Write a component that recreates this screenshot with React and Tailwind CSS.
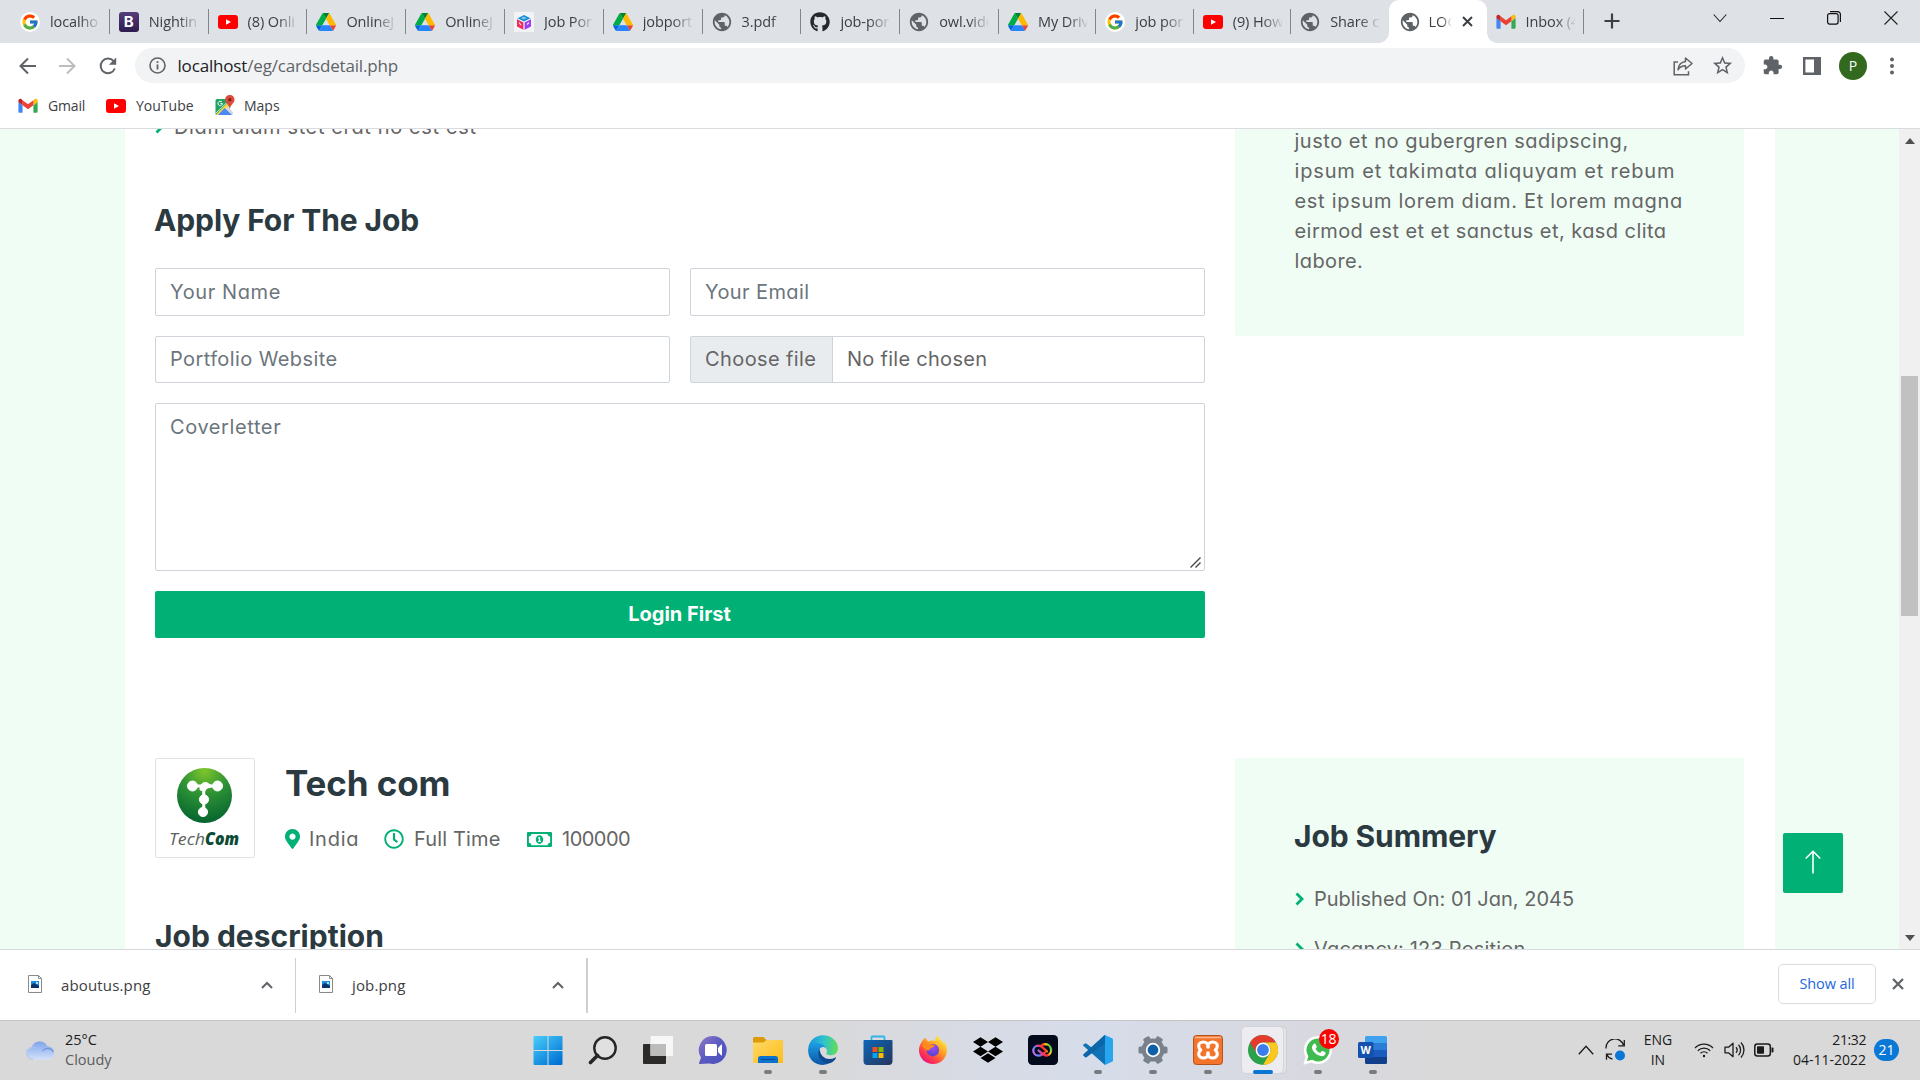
import React from "react";
import { FcGoogle } from "react-icons/fc";
import { FaGithub, FaMapMarkerAlt, FaRegClock, FaRegMoneyBillAlt } from "react-icons/fa";
import { MdExtension, MdPublic, MdStarBorder } from "react-icons/md";
import { SiDropbox } from "react-icons/si";

/* ---------- favicons ---------- */

const Google = () => (
  <div className="flex h-5 w-5 items-center justify-center rounded-full bg-white">
    <FcGoogle className="h-[18px] w-[18px]" />
  </div>
);

const Bootstrap = () => (
  <div className="flex h-5 w-5 items-center justify-center rounded-[3px] bg-gradient-to-b from-[#563d7c] to-[#2f1b50] font-['Inter',sans-serif] text-[15px] leading-none font-bold text-white">
    B
  </div>
);

const YouTube = () => (
  <svg className="h-5 w-5" viewBox="0 0 20 20">
    <rect x="0" y="3" width="20" height="14" rx="3" fill="#f00" />
    <path d="M8 7.200v5.600l5-2.800z" fill="#fff" />
  </svg>
);

const Drive = () => (
  <svg className="h-5 w-5" viewBox="0 0 87.3 78">
    <path d="m6.6 66.85 3.85 6.65c.8 1.4 1.95 2.5 3.3 3.3l13.75-23.8h-27.5c0 1.55.4 3.1 1.2 4.5z" fill="#0066da" />
    <path d="m43.65 25-13.75-23.8c-1.35.8-2.5 1.9-3.3 3.3l-25.4 44a9.06 9.06 0 0 0 -1.2 4.5h27.5z" fill="#00ac47" />
    <path d="m73.55 76.8c1.35-.8 2.5-1.9 3.3-3.3l1.6-2.75 7.65-13.25c.8-1.4 1.2-2.95 1.2-4.5h-27.502l5.852 11.5z" fill="#ea4335" />
    <path d="m43.65 25 13.75-23.8c-1.35-.8-2.9-1.2-4.5-1.2h-18.5c-1.6 0-3.15.45-4.5 1.2z" fill="#00832d" />
    <path d="m59.8 53h-32.3l-13.75 23.8c1.35.8 2.9 1.2 4.5 1.2h50.8c1.6 0 3.15-.45 4.5-1.2z" fill="#2684fc" />
    <path d="m73.4 26.5-12.7-22c-.8-1.4-1.95-2.5-3.3-3.3l-13.75 23.8 16.15 28h27.45c0-1.55-.4-3.1-1.2-4.5z" fill="#ffba00" />
  </svg>
);

const Cube = () => (
  <svg className="h-5 w-5" viewBox="0 0 20 20">
    <rect width="20" height="20" fill="#f3f3f5" />
    <path d="M10 3l6.5 3.2L10 9.5 3.5 6.2z" fill="#1c93d8" />
    <path d="M3 7.2l6.4 3.2v7.4L3 14.4z" fill="#ee2a5e" />
    <path d="M17 7.2l-6.4 3.2v7.4l6.4-3.4z" fill="#9b3df0" />
    <path d="M5 10.5l2 2.6M13 12.5l2-1.8M8 6h3.5" stroke="#f3f3f5" strokeWidth="1.1" />
  </svg>
);

const Globe = () => (
  <div className="flex h-5 w-5 items-center justify-center">
    <MdPublic className="h-[22px] w-[22px] shrink-0 text-[#5f6368]" />
  </div>
);

const Github = () => <FaGithub className="h-5 w-5 text-[#24292f]" />;

const Gmail = () => (
  <svg className="h-5 w-5" viewBox="0 0 24 24">
    <path d="M1.500 20h4V11L0.500 7v11.500c0 .8.400 1.500 1 1.500z" fill="#4285f4" />
    <path d="M18.500 20h3.500c.8 0 1.500-.7 1.500-1.500V7l-5 4z" fill="#34a853" />
    <path d="M18.500 5v6l5-3.800V5.800c0-2-2.200-3.100-3.700-1.900z" fill="#fbbc04" />
    <path d="M5.500 11V5L12 9.900 18.500 5v6L12 15.900z" fill="#ea4335" />
    <path d="M.5 5.800v1.400l5 3.800V5L4.200 3.900C2.700 2.700.5 3.800.5 5.800z" fill="#c5221f" />
  </svg>
);

const Maps = () => (
  <svg className="h-[22px] w-5" viewBox="0 0 20 22">
    <path d="M2 4h13v6L4 20H2a1.500 1.500 0 0 1-1.500-1.500v-13A1.500 1.500 0 0 1 2 4z" fill="#1ea362" />
    <path d="M9.500 13L17 20H3z" fill="#4a89f3" />
    <path d="M12 11l6 6v1.500a1.500 1.500 0 0 1-1.200 1.500L9.800 13.200z" fill="#d3d8de" />
    <path d="M1 19.500L14.500 6l2 2L4 20H2z" fill="#ffd73a" />
    <path d="M1 18L14 5.500" stroke="#fff" strokeWidth=".8" />
    <path d="M9.500 13L17 20H3z" fill="#4a89f3" />
    <path d="M14.800 0a4.600 4.600 0 0 1 4.700 4.700c0 3.300-3.900 4.500-4.700 9.500-.8-5-4.700-6.200-4.700-9.500A4.600 4.600 0 0 1 14.800 0z" fill="#dc4b3e" />
    <circle cx="14.800" cy="4.700" r="1.700" fill="#7a231b" />
    <path d="M6.800 6.900a2.200 2.200 0 1 0 .6 1.700H5.400" stroke="#fff" strokeWidth="1" fill="none" />
  </svg>
);

/* ---------- browser window ---------- */

const WIDE_TABS = [
  [Google, "localho"],
  [Bootstrap, "Nightin"],
  [YouTube, "(8) Onli"],
  [Drive, "OnlineJ"],
  [Drive, "OnlineJ"],
  [Cube, "Job Por"],
  [Drive, "jobport"],
  [Globe, "3.pdf"],
  [Github, "job-por"],
  [Globe, "owl.vide"],
];

const NARROW_TABS = [
  [Drive, "My Driv"],
  [Google, "job por"],
  [YouTube, "(9) How"],
];

function Tab({ Icon, title, width, noLine }) {
  return (
    <div className={"flex h-full shrink-0 items-center pl-[9px] " + width}>
      <Icon />
      <div className="ml-[10px] w-[49px] overflow-hidden text-[14.500px] tracking-[-0.1px] whitespace-nowrap text-[#3c4043] [mask-image:linear-gradient(to_right,black_60%,transparent_104%)]">
        {title}
      </div>
      {!noLine && <div className="ml-auto h-[25px] w-px bg-[#80868b]" />}
    </div>
  );
}

function TabStrip() {
  return (
    <div className="flex h-[43px] bg-[#dee1e6] pl-[11px]">
      {WIDE_TABS.map(([Icon, title], i) => (
        <Tab key={i} Icon={Icon} title={title} width="w-[98.8px]" />
      ))}
      {NARROW_TABS.map(([Icon, title], i) => (
        <Tab key={i} Icon={Icon} title={title} width="w-[97.4px]" />
      ))}
      <Tab Icon={Globe} title="Share c" width="w-[97.4px]" noLine />
      <div className="relative flex h-full w-[98px] shrink-0 items-center rounded-t-[10px] bg-white pl-[11px]">
        <div className="absolute bottom-0 -left-[10px] h-[10px] w-[10px] bg-[radial-gradient(circle_at_0_0,#dee1e6_9.500px,white_10px)]" />
        <div className="absolute -right-[10px] bottom-0 h-[10px] w-[10px] bg-[radial-gradient(circle_at_100%_0,#dee1e6_9.500px,white_10px)]" />
        <Globe />
        <div className="ml-[9px] w-[23px] overflow-hidden text-[14.500px] whitespace-nowrap text-[#3c4043] [mask-image:linear-gradient(to_right,black_55%,transparent)]">
          LOG
        </div>
        <svg className="ml-[10px] h-[11px] w-[11px]" viewBox="0 0 11 11">
          <path d="M1 1l9 9M10 1l-9 9" stroke="#3c4043" strokeWidth="2" />
        </svg>
      </div>
      <Tab Icon={Gmail} title="Inbox (4" width="w-[97.4px]" />
      <svg className="mt-[13px] ml-5 h-4 w-4" viewBox="0 0 16 16">
        <path d="M8 .5v15M.5 8h15" stroke="#3c4043" strokeWidth="2.200" />
      </svg>
      <div className="ml-auto flex items-center gap-[43px] pr-[22px] pb-[7px]">
        <svg className="h-[14px] w-[14px]" viewBox="0 0 14 14">
          <path d="M.7 3.500L7 10.500l6.300-7" fill="none" stroke="#222" strokeWidth="1.100" />
        </svg>
        <svg className="h-[14px] w-[14px]" viewBox="0 0 14 14">
          <path d="M0 7.500h14" stroke="#111" />
        </svg>
        <svg className="h-[14px] w-[14px]" viewBox="0 0 14 14">
          <rect x=".6" y="2.600" width="10.500" height="10.500" rx="2" fill="none" stroke="#111" strokeWidth="1.200" />
          <path d="M3 .6h7.500a2.800 2.800 0 0 1 2.900 2.900V11" fill="none" stroke="#111" strokeWidth="1.200" />
        </svg>
        <svg className="h-[14px] w-[14px]" viewBox="0 0 14 14">
          <path d="M.5.5l13 13M13.500.5l-13 13" stroke="#222" strokeWidth="1.100" />
        </svg>
      </div>
    </div>
  );
}

function Toolbar() {
  return (
    <div className="flex h-[45px] items-center bg-white pl-[18px]">
      <svg className="h-5 w-5" viewBox="0 0 20 20" fill="none" stroke="#5f6368" strokeWidth="2">
        <path d="M18 10H2.500M10 2.500L2.500 10l7.500 7.500" />
      </svg>
      <svg className="ml-[19px] h-5 w-5" viewBox="0 0 20 20" fill="none" stroke="#bbbdbf" strokeWidth="2">
        <path d="M2 10h15.500M10 2.500l7.500 7.500-7.500 7.500" />
      </svg>
      <svg className="ml-[21px] h-5 w-5" viewBox="0 0 20 20">
        <path d="M16.800 12.500A7.300 7.300 0 1 1 15.600 5.200" fill="none" stroke="#5f6368" strokeWidth="2" />
        <path d="M18.200 1.500v7.300h-7.300z" fill="#5f6368" />
      </svg>
      <div className="ml-[17px] flex h-[35px] w-[1610px] items-center rounded-full bg-[#f1f3f4] pr-[11px] pl-[14px]">
        <svg className="h-[17px] w-[17px]" viewBox="0 0 17 17">
          <circle cx="8.500" cy="8.500" r="7.500" fill="none" stroke="#5f6368" strokeWidth="1.600" />
          <path d="M8.500 7.500v5M8.500 4.300v1.800" stroke="#5f6368" strokeWidth="1.800" />
        </svg>
        <div className="ml-[11.500px] text-[17px] tracking-[-0.17px] text-[#5f6368]">
          <span className="text-[#202124]">localhost</span>/eg/cardsdetail.php
        </div>
        <svg className="ml-auto h-5 w-5" viewBox="0 0 20 20" fill="none" stroke="#5f6368" strokeWidth="1.500">
          <path d="M5 6H1.200v12.800h14.300v-3.500" />
          <path d="M12.500 2l6.500 5.500-6.500 5.500v-3.200c-3.500 0-5.700 1.200-7.500 4 .4-4.500 2.800-7.800 7.500-8.400z" strokeLinejoin="round" />
        </svg>
        <MdStarBorder className="ml-[18px] h-[23px] w-[23px] text-[#5f6368]" />
      </div>
      <MdExtension className="ml-[17px] h-[21px] w-[21px] text-[#5f6368]" />
      <svg className="ml-5 h-[18px] w-[18px]" viewBox="0 0 18 18">
        <path d="M1.200 1.200h15.600v15.600H1.200z" fill="none" stroke="#5f6368" strokeWidth="2.400" />
        <path d="M11 1h6v16h-6z" fill="#5f6368" />
      </svg>
      <div className="ml-[18px] flex h-7 w-7 items-center justify-center rounded-full bg-[#33691e] text-sm text-white">P</div>
      <svg className="ml-[23px] h-5 w-1" viewBox="0 0 4 20" fill="#5f6368">
        <circle cx="2" cy="3.500" r="2" />
        <circle cx="2" cy="10" r="2" />
        <circle cx="2" cy="16.500" r="2" />
      </svg>
    </div>
  );
}

function Bookmarks() {
  return (
    <div className="flex h-[41px] items-center border-b border-[#d9dbde] bg-white pb-[5px] pl-[18px] text-sm text-[#3c4043]">
      <Gmail />
      <div className="ml-[10px] w-[38px] tracking-[-0.15px]">Gmail</div>
      <div className="ml-5">
        <YouTube />
      </div>
      <div className="ml-[10px] w-[58px]">YouTube</div>
      <div className="ml-[21px]">
        <Maps />
      </div>
      <div className="ml-[9px]">Maps</div>
    </div>
  );
}

/* ---------- web page ---------- */

const Chevron = () => (
  <svg className="h-[14px] w-[9px] shrink-0" viewBox="0 0 9 14">
    <path d="M1.500 1.500L7 7l-5.500 5.500" fill="none" stroke="#00b074" strokeWidth="2.800" />
  </svg>
);

const FIELD = "flex h-full items-center rounded-[2px] border border-[#ced4da] bg-white px-[14px] text-[#6c757d]";
const HEAD = "font-['Inter',sans-serif] text-[30px] leading-9 font-bold text-[#2b3940]";

function ApplyForm() {
  return (
    <div>
      <div className="-mt-[17px] flex items-center">
        <Chevron />
        <span className="ml-[10px] tracking-[0.63px]">Diam diam stet erat no est est</span>
      </div>
      <h4 className={HEAD + " mt-[60px] mb-[30px] -ml-px tracking-[-0.1px]"}>Apply For The Job</h4>
      <div className="grid grid-cols-2 grid-rows-[48px_47px_168px_47px] gap-5">
        <div className={FIELD + " tracking-[0.6px]"}>Your Name</div>
        <div className={FIELD + " tracking-[0.4px]"}>Your Email</div>
        <div className={FIELD + " pb-px tracking-[0.4px]"}>Portfolio Website</div>
        <div className="flex h-full overflow-hidden rounded-[2px] border border-[#ced4da] bg-white">
          <div className="flex w-[142px] items-center border-r border-[#ced4da] bg-[#e9ecef] pb-px pl-[14px] tracking-[0.4px]">Choose file</div>
          <div className="flex items-center pb-px pl-[14px] tracking-[0.28px]">No file chosen</div>
        </div>
        <div className="relative col-span-2 rounded-[2px] border border-[#ced4da] bg-white px-[14px] py-2 tracking-[0.6px] text-[#6c757d]">
          Coverletter
          <svg className="absolute right-[3px] bottom-[2px] h-[11px] w-[11px]" viewBox="0 0 11 11">
            <path d="M.5 10.500l10-10M5.500 10.500l5-5" stroke="#444" strokeWidth="1.400" />
          </svg>
        </div>
        <div className="col-span-2 flex items-center justify-center rounded-[2px] bg-[#00b074] pr-px pb-px font-['Inter',sans-serif] font-bold text-white">
          Login First
        </div>
      </div>
    </div>
  );
}

function CompanyLogo() {
  return (
    <div className="h-[100px] w-[100px] rounded-[2px] border border-[#dee2e6] bg-white">
      <svg viewBox="0 0 98 98" className="h-full w-full">
        <defs>
          <radialGradient id="orb" cx=".5" cy=".05" r=".95">
            <stop offset="0" stopColor="#7fc62a" />
            <stop offset=".45" stopColor="#2f9335" />
            <stop offset="1" stopColor="#04642f" />
          </radialGradient>
        </defs>
        <circle cx="48.500" cy="36.500" r="27.500" fill="url(#orb)" />
        <g fill="#fff" stroke="#fff">
          <path d="M36 27h10M49 27h13M47.700 27v26" strokeWidth="3" />
          <circle cx="36.500" cy="27" r="5" />
          <path d="M44 31c0-5 2-7.500 5.500-7.500 2.500 0 3 2 5 2v3c-3 0-4.500 1-5.500 3.500z" />
          <circle cx="61.500" cy="27" r="5" />
          <circle cx="48" cy="40.500" r="4.600" />
          <circle cx="47" cy="53" r="4.600" />
        </g>
        <text x="13" y="86" fontFamily="Open Sans" fontSize="17" fontStyle="italic" fill="#5a625e" textLength="36" lengthAdjust="spacingAndGlyphs">
          Tech
        </text>
        <text x="49" y="86" fontFamily="Open Sans" fontSize="17" fontStyle="italic" fontWeight="800" fill="#0c4a33" textLength="34" lengthAdjust="spacingAndGlyphs">
          Com
        </text>
      </svg>
    </div>
  );
}

function JobHeader() {
  return (
    <div>
      <div className="flex items-center">
        <CompanyLogo />
        <div className="ml-[30px]">
          <h3 className="font-['Inter',sans-serif] text-[35px] leading-[42px] font-bold tracking-[-0.1px] text-[#2b3940]">Tech com</h3>
          <div className="mt-5 flex items-center">
            <FaMapMarkerAlt className="h-5 w-[15px] text-[#00b074]" />
            <span className="ml-[9px] w-[49px] tracking-[0.75px]">India</span>
            <FaRegClock className="ml-[26px] h-5 w-5 text-[#00b074]" />
            <span className="ml-[10px] w-[88px] tracking-[0.15px]">Full Time</span>
            <FaRegMoneyBillAlt className="ml-[25px] h-[25px] w-[25px] text-[#00b074]" />
            <span className="ml-[10px] tracking-[-0.5px]">100000</span>
          </div>
        </div>
      </div>
      <h4 className={HEAD + " mt-[60px] whitespace-nowrap"}>Job description</h4>
    </div>
  );
}

function Page() {
  return (
    <div className="relative flex h-[820px] overflow-hidden bg-[#effdf5] font-['Inter',sans-serif] text-xl leading-[30px] text-[#666565] [font-feature-settings:'cv11','calt'_0]">
      <div className="ml-[125px] grid h-full w-[1650px] grid-cols-[1050px_509px] grid-rows-[629px_300px] gap-x-[30px] bg-white pl-[30px]">
        <ApplyForm />
        <div className="h-[207px] rounded-b-[2px] bg-[#effdf5] pl-[59.500px] whitespace-nowrap">
          <div className="-mt-[3px]">
            <div className="tracking-[0.52px]">justo et no gubergren sadipscing,</div>
            <div className="tracking-[0.84px]">ipsum et takimata aliquyam et rebum</div>
            <div className="tracking-[0.7px]">est ipsum lorem diam. Et lorem magna</div>
            <div className="tracking-[0.44px]">eirmod est et et sanctus et, kasd clita</div>
            <div className="tracking-[0.4px]">labore.</div>
          </div>
        </div>
        <JobHeader />
        <div className="bg-[#effdf5] px-[60px] pt-[60px]">
          <h4 className={HEAD + " -ml-px tracking-[-0.1px]"}>Job Summery</h4>
          <div className="mt-[30px] flex items-center">
            <Chevron />
            <span className="ml-[10px]">Published On: 01 Jan, 2045</span>
          </div>
          <div className="mt-5 flex items-center">
            <Chevron />
            <span className="ml-[10px] tracking-[0.18px]">Vacancy: 123 Position</span>
          </div>
        </div>
      </div>
      <div className="ml-auto flex h-full w-[21px] flex-col items-center bg-[#f0f0f0]">
        <svg className="mt-[9px] h-[6px] w-[10px]" viewBox="0 0 10 6">
          <path d="M0 6l5-6 5 6z" fill="#505050" />
        </svg>
        <div className="mt-[232px] h-[240px] w-[17px] bg-[#c1c1c1]" />
        <svg className="mt-auto mb-[8px] h-[6px] w-[10px]" viewBox="0 0 10 6">
          <path d="M0 0l5 6 5-6z" fill="#505050" />
        </svg>
      </div>
      <div className="absolute right-[77px] bottom-[56px] flex h-[60px] w-[60px] items-center justify-center rounded-[2px] bg-[#00b074] pb-[2px]">
        <svg className="h-6 w-4" viewBox="0 0 16 24">
          <path d="M8 23V1.500M1.200 8L8 1.300 14.800 8" fill="none" stroke="#fff" strokeWidth="1.600" strokeLinecap="round" />
        </svg>
      </div>
    </div>
  );
}

/* ---------- downloads bar ---------- */

function Download({ name }) {
  return (
    <div className="flex h-[55px] items-center">
      <svg className="-mt-[3px] ml-7 h-[18px] w-[14px]" viewBox="0 0 14 18">
        <path d="M.5.5h10l3 3v14H.5z" fill="#fff" stroke="#8a8a8a" />
        <path d="M10.500.5v3h3" fill="none" stroke="#8a8a8a" />
        <path d="M3 6h8v7H3z" fill="#1c8be0" />
        <path d="M3 10l3-2 5 3v2H3z" fill="#0b3566" />
        <circle cx="9" cy="8" r="1" fill="#dff" />
      </svg>
      <div className="ml-[19px] w-[200px] text-[15px] tracking-[0.15px] text-[#3c4043]">{name}</div>
      <svg className="h-2 w-3" viewBox="0 0 12 8">
        <path d="M1 7l5-5 5 5" fill="none" stroke="#5f6368" strokeWidth="2" />
      </svg>
    </div>
  );
}

function DownloadBar() {
  return (
    <div className="flex h-[71px] items-center border-t border-[#d6d8db] bg-white">
      <div className="flex w-[296px] border-r border-[#cfcfcf]">
        <Download name="aboutus.png" />
      </div>
      <div className="flex w-[292px] border-r-2 border-[#cfcfcf]">
        <div className="-ml-[5px]">
          <Download name="job.png" />
        </div>
      </div>
      <div className="mb-[3px] ml-auto flex h-10 w-[98px] items-center justify-center rounded-[5px] border border-[#dadce0] text-[14.500px] tracking-[-0.1px] text-[#1a66e0]">
        Show all
      </div>
      <svg className="mr-4 mb-[2px] ml-4 h-3 w-3" viewBox="0 0 12 12">
        <path d="M1 1l10 10M11 1L1 11" stroke="#5f6368" strokeWidth="2.200" />
      </svg>
    </div>
  );
}

/* ---------- taskbar ---------- */

const Start = () => (
  <svg className="h-[30px] w-[30px]" viewBox="0 0 30 30">
    <defs>
      <linearGradient id="win" gradientUnits="userSpaceOnUse" x1="0" y1="0" x2="24" y2="30">
        <stop offset="0" stopColor="#4cd0fd" />
        <stop offset="1" stopColor="#0072d3" />
      </linearGradient>
    </defs>
    <path d="M.5 2a1 1 0 0 1 1-1H14.500v14H.5zM15.500 1H28.500a1 1 0 0 1 1 1v13h-14zM.5 16h14v14h-13a1 1 0 0 1-1-1zM15.500 16h14v13a1 1 0 0 1-1 1h-13z" fill="url(#win)" />
  </svg>
);

const Search = () => (
  <svg className="h-[30px] w-[30px]" viewBox="0 0 30 30" fill="none" stroke="#262626">
    <circle cx="17" cy="13" r="10.700" strokeWidth="2.400" fill="#ffffff30" />
    <path d="M9.500 20.500L2.500 27.500" strokeWidth="3.600" strokeLinecap="round" />
  </svg>
);

const TaskView = () => (
  <svg className="h-[30px] w-[30px]" viewBox="0 0 30 30">
    <rect x="0" y="9" width="23" height="20" rx="1" fill="#2c2b29" />
    <rect x="7.500" y="1" width="22.500" height="20" rx="1" fill="#f7f7f7" />
    <rect x="7.500" y="9" width="15.500" height="12" fill="#bcbcba" />
  </svg>
);

const Teams = () => (
  <svg className="h-[30px] w-[30px]" viewBox="0 0 30 30">
    <defs>
      <linearGradient id="chat" x1="0" y1="0" x2="1" y2="1">
        <stop offset="0" stopColor="#8d78c8" />
        <stop offset=".5" stopColor="#5a5ac0" />
        <stop offset="1" stopColor="#4b50bd" />
      </linearGradient>
    </defs>
    <path d="M15 1a14 14 0 1 1-4 27.500L1.800 29c-.8 0-1-.6-.7-1.200L3 22.500A14 14 0 0 1 15 1z" fill="url(#chat)" />
    <rect x="7" y="9" width="12" height="12" rx="1.500" fill="#fff" />
    <path d="M20 13l3-3.200c.5-.5 1 0 1 .5v9.400c0 .5-.5 1-1 .5L20 17z" fill="#fff" />
  </svg>
);

const Folder = () => (
  <svg className="h-[30px] w-[30px]" viewBox="0 0 30 30">
    <defs>
      <linearGradient id="fold" x1="0" y1="0" x2="1" y2="1">
        <stop offset="0" stopColor="#ffd869" />
        <stop offset="1" stopColor="#fdbd17" />
      </linearGradient>
    </defs>
    <path d="M0 3.500A1.500 1.500 0 0 1 1.500 2h9l3 3H28a2 2 0 0 1 2 2v5H0z" fill="#dd9b0b" />
    <path d="M0 7.500h10.500L13.500 5H28.500A1.500 1.500 0 0 1 30 6.500V28H0z" fill="url(#fold)" />
    <path d="M5 28v-4.500A2.500 2.500 0 0 1 7.500 21h15a2.500 2.500 0 0 1 2.500 2.500V28z" fill="#0c72cb" />
    <path d="M8.500 24.500h13" stroke="#064b8f" strokeWidth="1.200" strokeLinecap="round" />
  </svg>
);

const Edge = () => (
  <svg className="h-[30px] w-[30px]" viewBox="0 0 30 30">
    <defs>
      <linearGradient id="edgeA" x1="0" y1=".4" x2="1" y2=".5">
        <stop offset="0" stopColor="#1a92de" />
        <stop offset=".5" stopColor="#2fc3cf" />
        <stop offset="1" stopColor="#62dc57" />
      </linearGradient>
      <linearGradient id="edgeB" x1="0" y1="0" x2="0" y2="1">
        <stop offset="0" stopColor="#1b9ee2" />
        <stop offset="1" stopColor="#0c56a6" />
      </linearGradient>
    </defs>
    <path d="M.3 12.500C1.500 5.500 7.500.2 15 .2c8.500 0 15 6 15 13 0 4.200-3 7-7.200 7-3.300 0-5-1.200-4.300-2.300.9-1.500.6-3.200-.8-5-2.500-3.200-10.500-4.700-17.400-.4z" fill="url(#edgeA)" />
    <path d="M.2 14C.6 9.500 5 7.700 9 7.900c5 .2 8 2.600 8.800 5.300-1.800-2-5-1.700-6.100.7-2.400 6 2.300 15 11 13.600a15 15 0 0 1-8.400 2.400C5 29.600-.6 22.500.2 14z" fill="url(#edgeB)" />
    <path d="M11.600 14c-3.500 5.500.5 14.500 9.500 14.300 3-.1 5.500-2.600 6.800-5 .4-.9-.3-1-1-.6-6.500 3.200-14.500.5-15.300-8.700z" fill="#11498f" />
  </svg>
);

const Store = () => (
  <svg className="h-[30px] w-[30px]" viewBox="0 0 30 30">
    <defs>
      <linearGradient id="store" x1="0" y1="0" x2="1" y2="1">
        <stop offset="0" stopColor="#0e66b8" />
        <stop offset="1" stopColor="#26355c" />
      </linearGradient>
    </defs>
    <path d="M8.500 6V2.500A1 1 0 0 1 9.500 1.500h11a1 1 0 0 1 1 1V6" fill="none" stroke="#2fb4ec" strokeWidth="1.800" />
    <path d="M.5 6a1 1 0 0 1 1-1h27a1 1 0 0 1 1 1v20a4 4 0 0 1-4 4h-21a4 4 0 0 1-4-4z" fill="url(#store)" />
    <path d="M9.500 12h5v5h-5z" fill="#f25022" />
    <path d="M15.500 12h5v5h-5z" fill="#7fba00" />
    <path d="M9.500 18h5v5h-5z" fill="#00a4ef" />
    <path d="M15.500 18h5v5h-5z" fill="#ffb900" />
  </svg>
);

const Firefox = () => (
  <svg className="h-[30px] w-[30px]" viewBox="0 0 30 30">
    <defs>
      <linearGradient id="fox" x1=".85" y1=".1" x2=".2" y2=".95">
        <stop offset="0" stopColor="#fff04a" />
        <stop offset=".4" stopColor="#ff9a1f" />
        <stop offset=".75" stopColor="#ff3a4d" />
        <stop offset="1" stopColor="#e8127e" />
      </linearGradient>
      <radialGradient id="foxCore" cx=".5" cy=".3" r=".7">
        <stop offset="0" stopColor="#a04bf0" />
        <stop offset="1" stopColor="#5544cf" />
      </radialGradient>
    </defs>
    <path d="M19.500.3c-2 2-2.200 4-2.100 5.500-2.500-.6-5-.4-7 .7L8.700 5 7.500 2.800C5.500 4.200 4 6 3.600 7.300 1.300 10.300.7 13.500 1.100 17 2 24 7.800 29 15 29c8 0 14-6.200 14-14 0-4.500-1.800-7.200-3.300-8.700l.2 2.600C24.500 5 20.500 4 19.500.3z" fill="url(#fox)" />
    <circle cx="14.800" cy="15.200" r="6.200" fill="url(#foxCore)" />
    <path d="M4 9.500c2-1.800 5-1.500 6.700.5 1.500-.7 4.500-.8 6 1-1 1.400-2.700 1.500-4 2.200-1 .7-.5 1.800-2.400 2.300C8.200 15.500 5 13 4 9.500z" fill="#ff8a1c" />
  </svg>
);

const Dropbox = () => <SiDropbox className="h-[30px] w-[30px] text-black" />;

const CreativeCloud = () => (
  <svg className="h-[30px] w-[30px]" viewBox="0 0 30 30">
    <defs>
      <linearGradient id="cc" x1="0" y1=".7" x2="1" y2=".4">
        <stop offset="0" stopColor="#c56bf5" />
        <stop offset=".2" stopColor="#4a8cff" />
        <stop offset=".4" stopColor="#f0388a" />
        <stop offset=".65" stopColor="#ff3a1d" />
        <stop offset=".85" stopColor="#ffd21d" />
        <stop offset="1" stopColor="#4ed24a" />
      </linearGradient>
    </defs>
    <rect width="30" height="30" rx="4.500" fill="#020a1c" />
    <path
      d="M17 17.500l-2.800 2c-1 .7-2.200 1.100-3.700 1.100a5 5 0 0 1-.3-10c1.600 0 2.700.5 4 1.600l4.800 4.300M12.500 11.200c1.300-1.300 3-2 5-2a5.800 5.800 0 0 1 1.300 11.400c-2 0-3-.7-4.200-1.700L10.500 15.500"
      fill="none"
      stroke="url(#cc)"
      strokeWidth="2.300"
      strokeLinecap="round"
    />
  </svg>
);

const VSCode = () => (
  <svg className="h-[30px] w-[30px]" viewBox="0 0 30 30">
    <path d="M22 0L8.800 12.700 3 8.200.6 9.300a1 1 0 0 0 0 1.600L22 30V21z" fill="#0f73b5" />
    <path d="M22 0v8.500L3.500 22.300c-.5.300-.9.300-1.300 0L.5 20.700a1 1 0 0 1 0-1.500L21 .6z" fill="#0a66a8" />
    <path d="M22 0l7 3.200c.6.300 1 .8 1 1.500v20.600c0 .7-.4 1.200-1 1.500L22 30z" fill="#27a5ee" />
  </svg>
);

const Settings = () => (
  <svg className="h-[30px] w-[30px]" viewBox="0 0 30 30">
    <g fill="#79818a">
      <circle cx="15" cy="15" r="11.500" />
      <rect x="11.500" y="0.500" width="7" height="29" rx="1.500" transform="rotate(30 15 15)" />
      <rect x="11.500" y="0.500" width="7" height="29" rx="1.500" transform="rotate(90 15 15)" />
      <rect x="11.500" y="0.500" width="7" height="29" rx="1.500" transform="rotate(150 15 15)" />
    </g>
    <circle cx="15" cy="15" r="6.300" fill="#0f5fa8" stroke="#fff" strokeWidth="1.800" />
  </svg>
);

const Xampp = () => (
  <svg className="h-[30px] w-[30px]" viewBox="0 0 30 30">
    <rect x=".5" y=".5" width="29" height="29" rx="3" fill="#f3742a" stroke="#b4531b" />
    <path d="M2 2.500h26" stroke="#f9b78f" strokeWidth="1.500" />
    <path
      d="M15 11.200c0-2.500-1.800-4.200-4.600-4.200S5.700 8.800 5.700 11c0 1.700.8 3 2 4-1.200 1-2 2.300-2 4 0 2.200 1.900 4 4.700 4s4.600-1.700 4.600-4.200c0 2.500 1.800 4.200 4.600 4.200s4.700-1.800 4.700-4c0-1.700-.8-3-2-4 1.200-1 2-2.300 2-4 0-2.200-1.900-4-4.700-4S15 8.700 15 11.200z"
      fill="none"
      stroke="#fff"
      strokeWidth="3.200"
      strokeLinejoin="round"
    />
    <path d="M13.400 10.500h3.200v3h-3.200zM13.400 16.500h3.200v3h-3.200z" fill="#fff" />
  </svg>
);

const Chrome = () => (
  <svg className="h-[30px] w-[30px]" viewBox="0 0 30 30">
    <circle cx="15" cy="15" r="15" fill="#2ba14b" />
    <path d="M15 0a15 15 0 0 1 13 7.500H15A7.500 7.500 0 0 0 8.500 18.700L2 7.500A15 15 0 0 1 15 0z" fill="#e33b2e" />
    <path d="M28 7.500A15 15 0 0 1 15 30l6.500-11.300A7.500 7.500 0 0 0 21.500 11.300 7.500 7.500 0 0 0 15 7.500z" fill="#fcc71f" />
    <circle cx="15" cy="15" r="7.400" fill="#fff" />
    <circle cx="15" cy="15" r="5.900" fill="#3b7ded" />
  </svg>
);

const WhatsApp = () => (
  <div className="relative h-[30px] w-[30px]">
    <svg className="h-[30px] w-[30px]" viewBox="0 0 30 30">
      <path d="M15 1A14 14 0 0 1 15 29a14 14 0 0 1-6.700-1.600L.3 29.700l2.300-7.900A14 14 0 0 1 15 1z" fill="#fff" />
      <path d="M15 3.500A11.500 11.500 0 1 1 9 24.800l-5 1.300 1.400-4.800A11.500 11.500 0 0 1 15 3.500z" fill="#3fbb50" />
      <path d="M10.800 9c.6-.6 1.500-.6 1.800.1l1.100 2.500c.2.600-.1 1-1.200 2.200 1.200 2.200 2.600 3.400 4.700 4.200l1.400-1.700c.3-.4.7-.4 1.100-.2l2.500 1.200c.6.300.4 1.500 0 2.200-1 1.600-3.200 2-5.200 1.300-4.200-1.400-6.500-3.800-7.800-6.900-.7-2 .2-3.700 1.600-4.900z" fill="#fff" />
    </svg>
    <div className="absolute -top-[6px] left-4 flex h-5 w-5 items-center justify-center rounded-full bg-[#f90400] text-sm leading-none tracking-[-0.3px] text-white">
      18
    </div>
  </div>
);

const Word = () => (
  <svg className="h-[30px] w-[30px]" viewBox="0 0 30 30">
    <path d="M7 2.500A1.500 1.500 0 0 1 8.500 1h19A1.500 1.500 0 0 1 29 2.500V8H7z" fill="#3fa2ee" />
    <path d="M7 8h22v7H7z" fill="#2a7cd6" />
    <path d="M7 15h22v7H7z" fill="#1a5dbe" />
    <path d="M7 22h22v5.500a1.500 1.500 0 0 1-1.500 1.500h-19A1.500 1.500 0 0 1 7 27.500z" fill="#113f8c" />
    <rect x="0" y="7" width="15.500" height="16" rx="1.500" fill="#1650ae" />
    <text x="7.700" y="18.700" textAnchor="middle" fontFamily="Inter" fontWeight="700" fontSize="10.500" fill="#fff">
      W
    </text>
  </svg>
);

const APPS = [
  [Start],
  [Search],
  [TaskView],
  [Teams],
  [Folder, "dot"],
  [Edge, "dot"],
  [Store],
  [Firefox],
  [Dropbox],
  [CreativeCloud],
  [VSCode, "dot"],
  [Settings, "dot"],
  [Xampp, "dot"],
  [Chrome, "active"],
  [WhatsApp, "dot"],
  [Word, "dot"],
];

function Taskbar() {
  return (
    <div className="flex h-[60px] items-center border-t border-[#c6c6c8] bg-[linear-gradient(to_right,#d9d9d9_0%,#d9d9d9_42%,#d7dbe6_52%,#d6dce9_57%,#d8d9e0_68%,#d9d9d9_76%)] pb-px text-sm text-[#1b1b1b]">
      <svg className="ml-[26px] h-[24px] w-[30px]" viewBox="0 0 30 24">
        <defs>
          <linearGradient id="cloud" x1="0" y1="0" x2="0" y2="1">
            <stop offset="0" stopColor="#7ea3ea" />
            <stop offset="1" stopColor="#d3e1fb" />
          </linearGradient>
        </defs>
        <path d="M6.500 21.500A6 6 0 0 1 5.500 9.800 8.600 8.600 0 0 1 21.500 8.300a6.800 6.800 0 0 1 2 13.200z" fill="url(#cloud)" />
        <path d="M7 21A6 6 0 1 1 12 12" fill="none" stroke="#a9c3f4" />
        <path d="M16.500 13a6.500 6.500 0 0 1 11 1" fill="none" stroke="#7193dd" strokeWidth="1.200" />
      </svg>
      <div className="ml-[9px] w-[455px] text-[14.500px] leading-5">
        <div>25°C</div>
        <div className="text-[#5b5b5b]">Cloudy</div>
      </div>
      {APPS.map(([Icon, mark], i) => (
        <div key={i} className="relative flex h-full w-[55px] shrink-0 items-center justify-center">
          {mark === "active" && (
            <>
              <div className="absolute top-[5px] right-[3px] h-[48px] w-9 rounded-[5px] border border-[#cfcfd3] bg-[#e4e4e9]" />
              <div className="absolute top-[5px] left-[6px] h-[48px] w-[43px] rounded-[5px] border border-[#d3d3d8] bg-[#ededf1]" />
              <div className="absolute bottom-[5px] left-[18px] h-1 w-5 rounded-full bg-[#0877d4]" />
            </>
          )}
          {mark === "dot" && <div className="absolute bottom-[5px] left-[24px] h-1 w-2 rounded-full bg-[#7b7b7d]" />}
          <div className="relative">
            <Icon />
          </div>
        </div>
      ))}
      <svg className="ml-auto h-[10px] w-4" viewBox="0 0 16 10">
        <path d="M.8 9.200L8 1.200l7.200 8" fill="none" stroke="#1b1b1b" strokeWidth="1.300" />
      </svg>
      <svg className="ml-[11px] h-[22px] w-[21px]" viewBox="0 0 21 22">
        <path d="M1 9.500A9 9 0 0 1 18.500 6M19.300 1v5.800h-6M7.500 20.200A9 9 0 0 1 1.700 15.500M7 15.200H1.500v5.500" fill="none" stroke="#1b1b1b" strokeWidth="1.300" />
        <circle cx="15" cy="16.500" r="5" fill="#0a76d6" />
      </svg>
      <div className="ml-[17px] w-[30px] text-center leading-5">
        <div>ENG</div>
        <div>IN</div>
      </div>
      <svg className="ml-[21px] h-4 w-5" viewBox="0 0 20 16" fill="none" stroke="#1b1b1b" strokeWidth="1.300">
        <path d="M1 6a12.500 12.500 0 0 1 18 0M3.800 8.700a8.700 8.700 0 0 1 12.400 0M6.500 11.300a5 5 0 0 1 7 0" />
        <circle cx="10" cy="14" r="1.200" fill="#1b1b1b" stroke="none" />
      </svg>
      <svg className="ml-[10px] h-[18px] w-[21px]" viewBox="0 0 21 18" fill="none" stroke="#1b1b1b" strokeWidth="1.300">
        <path d="M1 6.200h3.500L9 2.300v13.400l-4.500-3.900H1z" strokeLinejoin="round" />
        <path d="M12 6.300a4 4 0 0 1 0 5.400M14.500 3.800a7.500 7.500 0 0 1 0 10.400M17 1.500a11 11 0 0 1 0 15" />
      </svg>
      <svg className="ml-[9px] h-[14px] w-5" viewBox="0 0 20 14">
        <rect x=".8" y="1" width="15.500" height="12" rx="2.500" fill="none" stroke="#1b1b1b" strokeWidth="1.500" />
        <rect x="3" y="3.200" width="7" height="7.600" rx=".8" fill="#1b1b1b" />
        <path d="M17.500 4.500h1a1 1 0 0 1 1 1v3a1 1 0 0 1-1 1h-1z" fill="#1b1b1b" />
      </svg>
      <div className="ml-[19px] text-right leading-5">
        <div className="tracking-[-0.4px]">21:32</div>
        <div>04-11-2022</div>
      </div>
      <div className="mr-[21px] ml-2 flex h-[22px] w-[25px] items-center justify-center rounded-full bg-[#0a78d6] text-sm leading-none text-white">
        21
      </div>
    </div>
  );
}

export default function App() {
  return (
    <div className="flex h-[1080px] w-[1920px] flex-col overflow-hidden bg-white font-['Open_Sans',sans-serif]">
      <TabStrip />
      <Toolbar />
      <Bookmarks />
      <Page />
      <DownloadBar />
      <Taskbar />
    </div>
  );
}
